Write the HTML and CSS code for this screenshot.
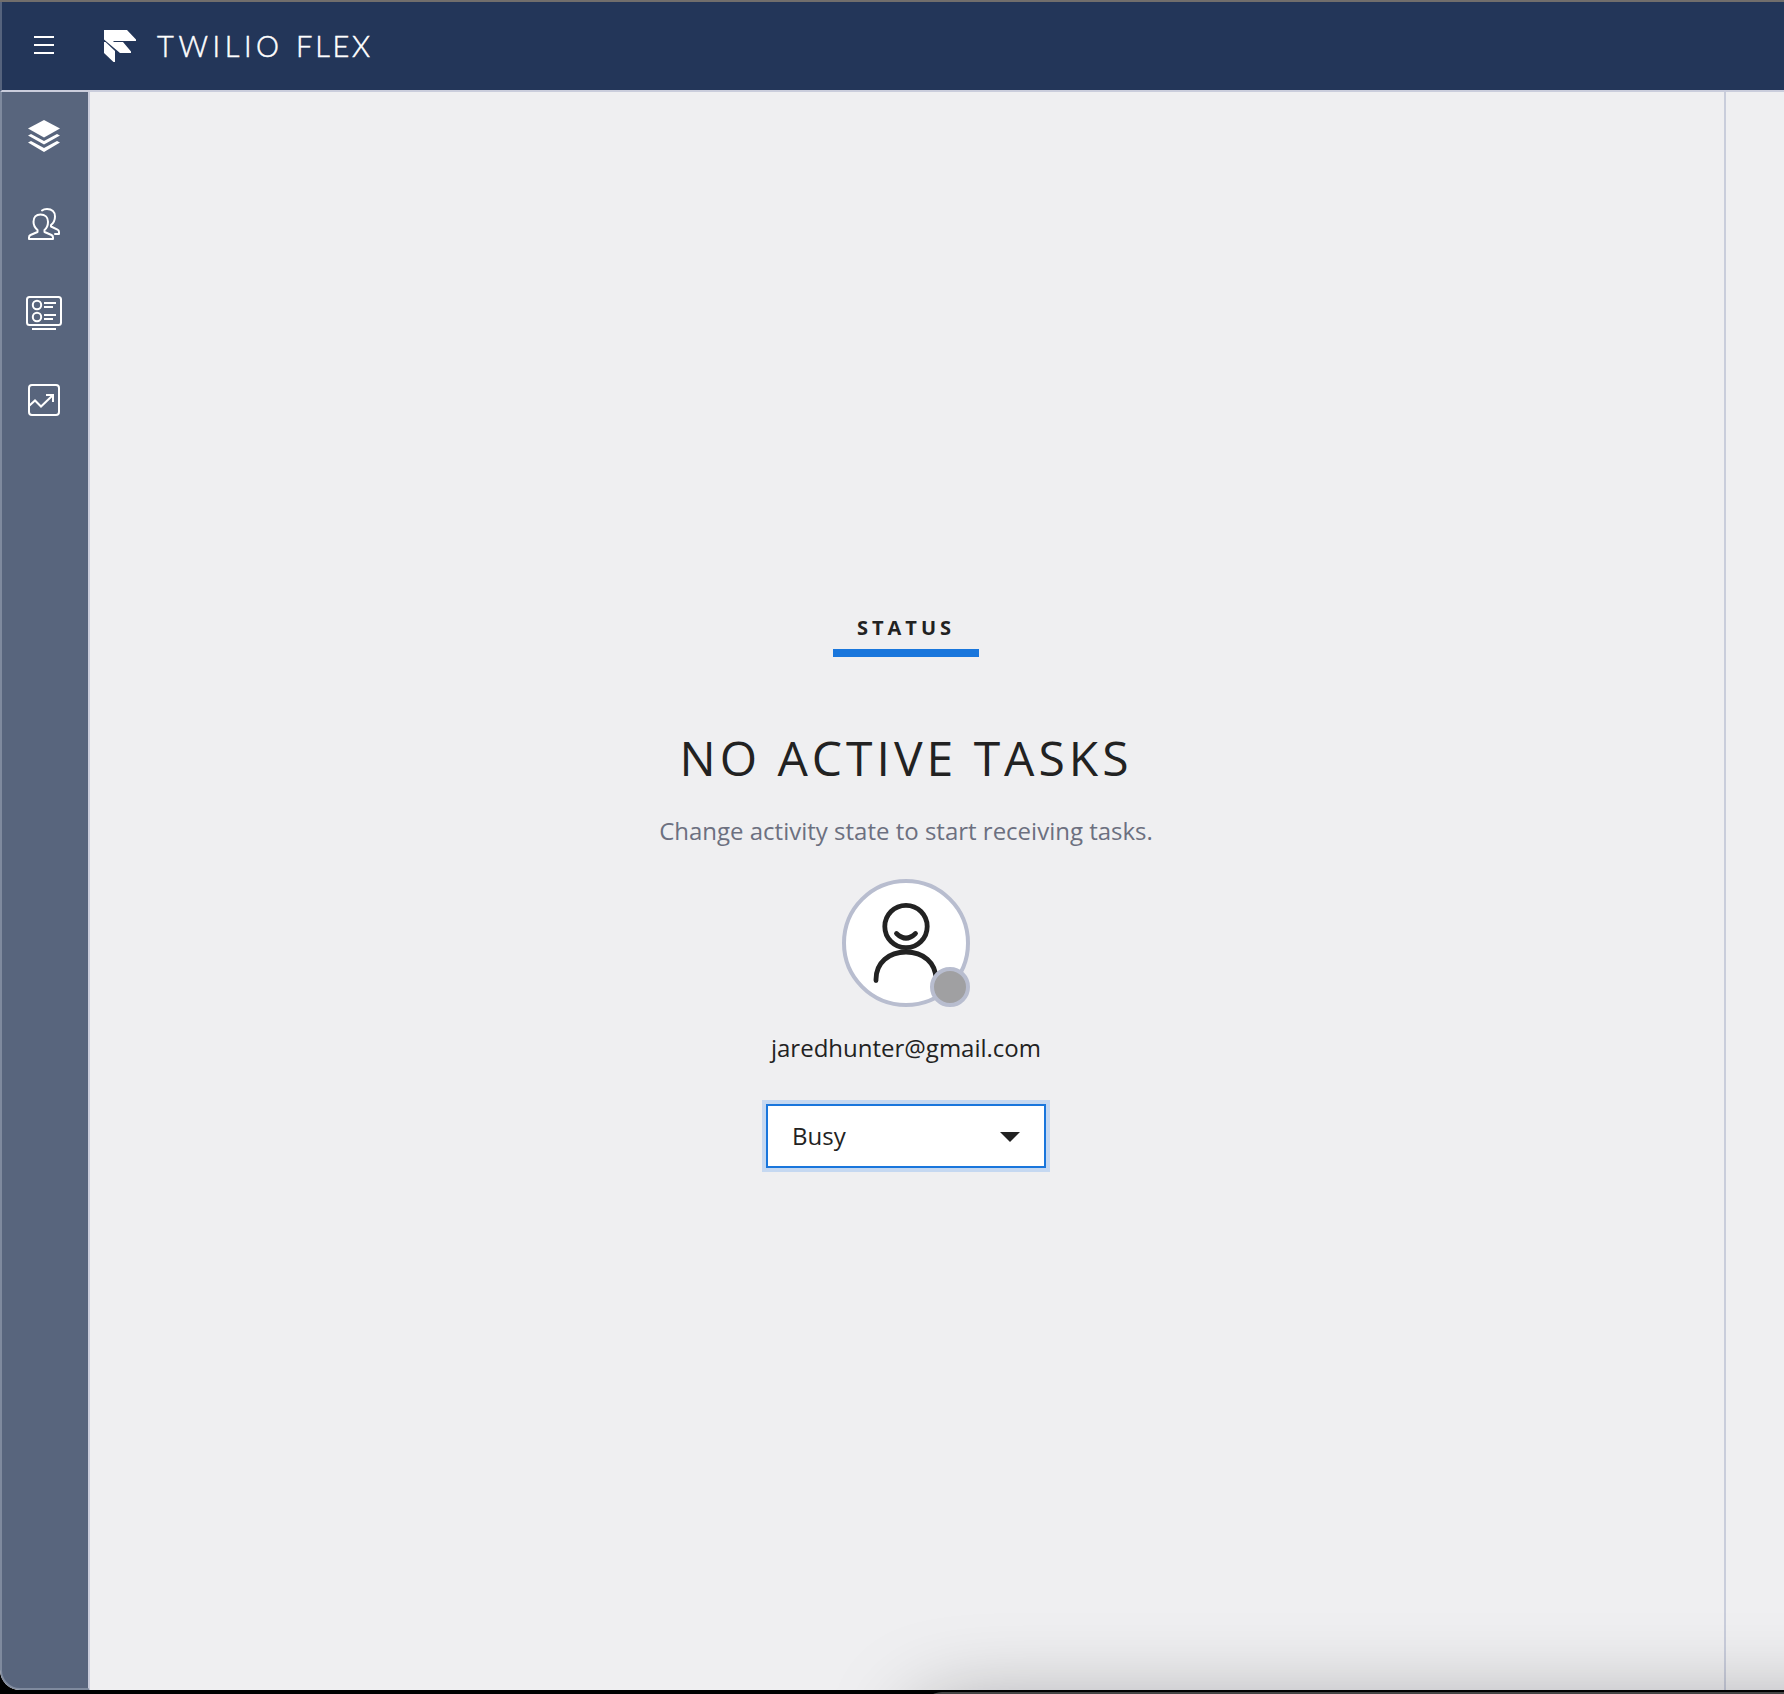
FILE: index.html
```html
<!DOCTYPE html>
<html lang="en">
<head>
<meta charset="utf-8">
<title>Twilio Flex</title>
<link rel="stylesheet" href="styles.css">
</head>
<body>
<div class="window">
  <header class="topbar">
    <button class="menu" aria-label="Menu"><svg width="20" height="20" viewBox="0 0 20 20"><path d="M0 2h20M0 10h20M0 18h20" stroke="#fff" stroke-width="2"/></svg></button>
    <svg class="logo" width="32" height="32" viewBox="0 0 32 32" fill="#fff"><path d="M0 0h23l9 9.500V11H9.500v1H19l8 9.500V23H16L0 9.500Z"/><path d="M0 12h1.500L11 21v11H9.500L0 23Z"/></svg>
    <span class="brand">TWILIO <span class="product">FLEX</span></span>
  </header>
  <div class="body">
    <nav class="sidebar">
      <a class="item"><svg width="36" height="36" viewBox="0 0 36 36" fill="#fff"><path d="M18 2 34 10.500 18 19.500 2 10.500Z"/><path d="M2 17.500 5 16l13 7 13-7 3 1.500L18 26.500Z"/><path d="M2 24.500 5 23l13 7 13-7 3 1.500L18 34Z"/></svg></a>
      <a class="item"><svg width="36" height="36" viewBox="0 0 36 36" fill="none" stroke="#fff" stroke-width="2" stroke-linejoin="round" stroke-linecap="round"><path d="M14.500 8.500c-4.500 0-7 3-7 7.300 0 3.700 1.500 6.200 4 8.200v2L4.500 29C3.500 29.500 3 30.500 3 31.500V33h24v-1.500c0-1-.5-2-1.500-2.500L18.500 26v-2c2.500-2 3.500-4.500 3.500-8.200 0-4.300-3-7.300-7.500-7.300Z"/><path d="M16 4.500C17.500 3.300 19 3 21 3c5 0 8 3 8 7.500 0 4-1.500 6.500-4 8.500v1.500l6.500 3.200c1 .5 1.500 1.300 1.500 2.300v2h-4"/></svg></a>
      <a class="item"><svg width="36" height="36" viewBox="0 0 36 36" fill="none" stroke="#fff" stroke-width="2"><rect x="1" y="3" width="34" height="28" rx="2.500"/><circle cx="11" cy="11" r="4.200"/><circle cx="11" cy="23" r="4.200"/><path d="M18 9h12M18 13h9M18 21h12M18 25h9M6 35h24"/></svg></a>
      <a class="item"><svg width="36" height="36" viewBox="0 0 36 36" fill="none" stroke="#fff" stroke-width="2"><rect x="3" y="3" width="30" height="30" rx="3"/><path d="m3 24 6-5.500 6 6L27 13M20 13h7v7"/></svg></a>
    </nav>
    <main class="panel">
      <h2 class="status">STATUS</h2>
      <h1 class="title">NO ACTIVE TASKS</h1>
      <p class="hint">Change activity state to start receiving tasks.</p>
      <div class="avatar">
        <svg width="120" height="120" viewBox="0 0 120 120" fill="none" stroke="#222" stroke-width="4.800" stroke-linecap="round"><circle cx="60" cy="43.500" r="21.200"/><path d="M50.500 50.500q9.500 9.300 19 0M30 97.500v-1c0-17 13-27.500 30-27.500s30 10.500 30 27.500"/></svg>
        <span class="presence"></span>
      </div>
      <p class="email">jaredhunter@gmail.com</p>
      <button class="select"><span>Busy</span><svg class="caret" width="20" height="10" viewBox="0 0 20 10"><path d="M0 0h20L10 10Z" fill="#222"/></svg></button>
    </main>
    <aside class="side"></aside>
  </div>
</div>
<div class="front-layer"><div class="front-window"></div></div>
</body>
</html>
```
FILE: styles.css
```css
* { box-sizing: border-box; }
html, body { height: 100%; }
body {
  margin: 0;
  position: relative;
  overflow: hidden;
  background: #000;
  font-family: "Open Sans", sans-serif;
  color: #222;
}
button { font: inherit; color: inherit; margin: 0; padding: 0; border: 0; background: none; }
svg { display: block; flex: none; }

.window {
  height: 1690px;
  display: flex;
  flex-direction: column;
  border-top: 2px solid #716e6c;
  border-bottom-left-radius: 20px;
  overflow: hidden;
  background: #efeff1;
}
.topbar {
  flex: 0 0 90px;
  display: flex;
  align-items: center;
  padding-left: 32px;
  background: #233659;
  border-left: 2px solid #55637d;
  border-bottom: 2px solid #cacddc;
}
.menu { padding-bottom: 2px; }
.logo { margin-left: 50px; }
.brand {
  margin-left: 21px;
  padding-bottom: 1px;
  font: 300 29px/40px Lato, sans-serif;
  letter-spacing: 4.6px;
  color: #fff;
  -webkit-text-stroke: .5px #fff;
}
.product { margin-left: 0; letter-spacing: 2.7px; }
.body { flex: 1; display: flex; min-height: 0; }
.sidebar {
  flex: 0 0 90px;
  padding-right: 2px;
  border-left: 2px solid #7f8a9e;
  border-right: 2px solid #cacddc;
  border-bottom: 2px solid #7f8a9e;
  border-bottom-left-radius: 20px;
  background: #58657d;
}
.item { height: 88px; display: flex; align-items: center; justify-content: center; }
.panel {
  flex: 1;
  display: flex;
  flex-direction: column;
  align-items: center;
  padding: 521px 2px 0 0;
}
.status {
  width: 146px;
  height: 44px;
  margin: 0;
  border-bottom: 8px solid #1976dc;
  font-size: 20px;
  line-height: 30px;
  font-weight: 700;
  letter-spacing: 4px;
  text-align: center;
}
.title {
  margin: 68px 0 0;
  font-size: 48px;
  line-height: 66px;
  font-weight: 400;
  letter-spacing: 4px;
}
.hint { margin: 24px 0 0; font-size: 24px; line-height: 32px; color: #6c7080; }
.avatar {
  position: relative;
  width: 128px;
  height: 128px;
  margin-top: 32px;
  border: 4px solid #b8bdcf;
  border-radius: 50%;
  background: #fff;
}
.presence {
  position: absolute;
  right: -4px;
  bottom: -4px;
  width: 40px;
  height: 40px;
  border: 4px solid #b8bdcf;
  border-radius: 50%;
  background: #a0a0a2;
}
.email { margin: 25px 0 0; font-size: 24px; line-height: 32px; }
.select {
  width: 280px;
  height: 64px;
  margin-top: 40px;
  padding: 0 24px;
  display: flex;
  align-items: center;
  justify-content: space-between;
  border: 2px solid #1976dc;
  box-shadow: 0 0 0 4px #c5d8f1;
  background: #fff;
  font-size: 24px;
  line-height: 32px;
}
.caret { margin-top: 2px; }
.side { flex: 0 0 60px; border-left: 2px solid #c9cddb; }

/* Top edge of the window stacked in front, with the shadow it casts upward */
.front-layer {
  position: absolute;
  inset: 0;
  overflow: hidden;
  pointer-events: none;
}
.front-window {
  position: absolute;
  left: 922px;
  right: -200px;
  top: 1692px;
  height: 300px;
  border-top-left-radius: 20px;
  background: #454545;
  box-shadow: 0 22px 92px rgba(0, 0, 10, .4);
}
```
